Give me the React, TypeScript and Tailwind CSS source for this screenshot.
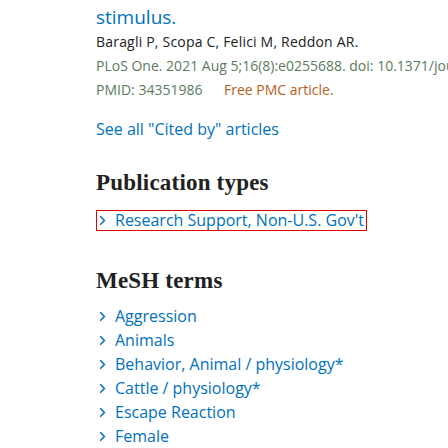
import React from "react";

const mesh = [
  "Aggression",
  "Animals",
  "Behavior, Animal / physiology*",
  "Cattle / physiology*",
  "Escape Reaction",
  "Female",
];

function Chevron() {
  return (
    <svg width="7" height="11" viewBox="0 0 7 11" className="shrink-0">
      <path d="M1.2 1.2 L5.4 5.5 L1.2 9.8" fill="none" stroke="#0071bc" strokeWidth="1.5" />
    </svg>
  );
}

export default function App() {
  return (
    <div className="w-[448px] h-[448px] overflow-hidden bg-white pl-[96px] font-['Open_Sans',sans-serif] font-normal text-[#212121] whitespace-nowrap">
      {/* citation tail */}
      <div className="mt-[5px] text-[19px] leading-[25px] text-[#0071bc]">stimulus.</div>
      <div className="text-[14px] leading-[24px] tracking-[0.2px]">Baragli P, Scopa C, Felici M, Reddon AR.</div>
      <div className="text-[14px] leading-[24px] text-[#5b7a5e]">
        PLoS One. 2021 Aug 5;16(8):e0255688. doi: 10.1371/journal.pone.0255688.
      </div>
      <div className="text-[14px] leading-[24px] text-[#5b7a5e] flex">
        <span className="w-[128px]">PMID: 34351986</span>
        <span className="text-[#b5601e]">Free PMC article.</span>
      </div>

      <div className="mt-[15px] text-[16px] leading-[24px] text-[#0071bc]">See all "Cited by" articles</div>

      {/* Publication types */}
      <h2 className="mt-[28px] font-['Liberation_Serif',serif] font-bold text-[23px] leading-[28px] tracking-[0.2px]">Publication types</h2>
      <div className="mt-[11px]">
        <div className="inline-flex items-center gap-[9px] border border-[#e00000] pl-[2px] pr-[2px] text-[16px] leading-[19px] text-[#0071bc]">
          <Chevron />
          <span>Research Support, Non-U.S. Gov't</span>
        </div>
      </div>

      {/* MeSH terms */}
      <h2 className="mt-[35px] font-['Liberation_Serif',serif] font-bold text-[23px] leading-[28px] tracking-[0.2px]">MeSH terms</h2>
      <ul className="mt-[9px]">
        {mesh.map((m) => (
          <li key={m} className="flex items-center gap-[9px] pl-[3px] text-[16px] leading-[24px] text-[#0071bc]">
            <Chevron />
            <span>{m}</span>
          </li>
        ))}
      </ul>
    </div>
  );
}
